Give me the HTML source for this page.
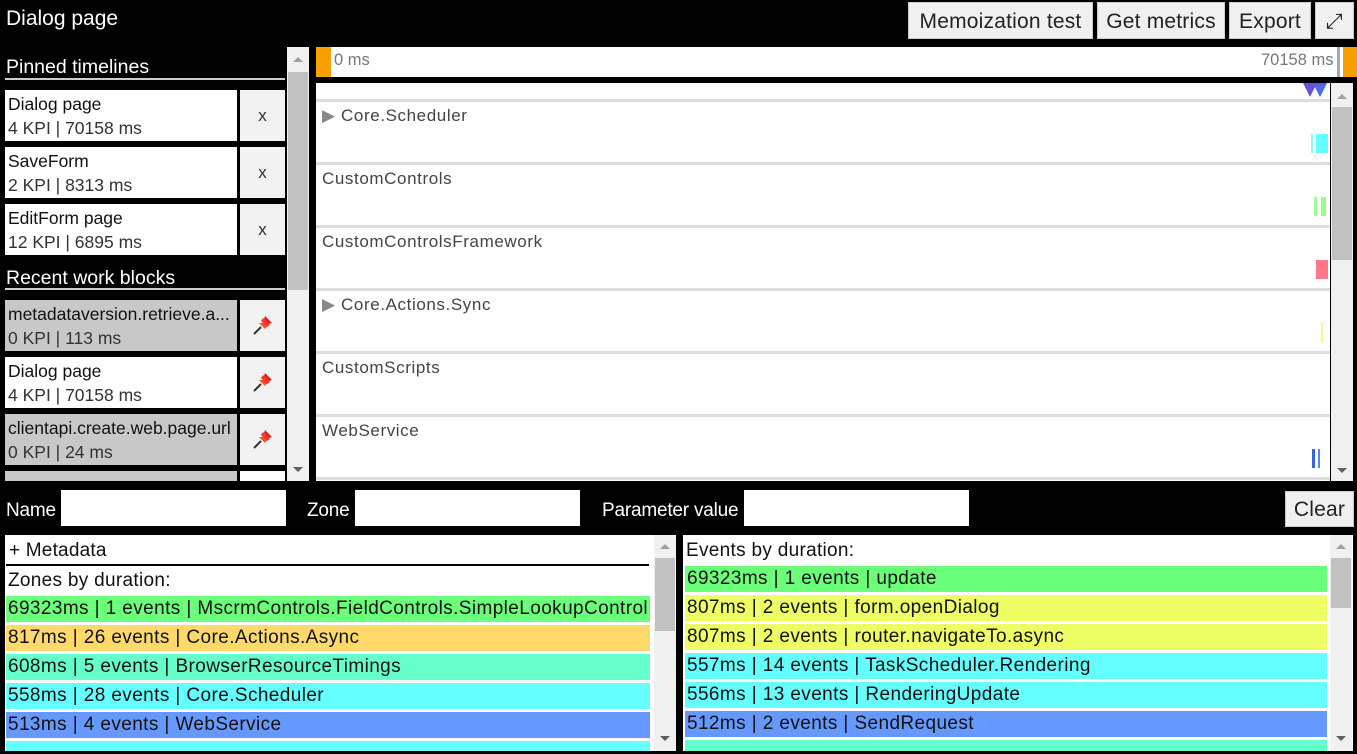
<!DOCTYPE html>
<html><head><meta charset="utf-8"><style>
*{box-sizing:border-box;margin:0;padding:0}
body{width:1357px;height:754px;background:#000;position:relative;overflow:hidden;font-family:"Liberation Sans",sans-serif;}
.a{position:absolute;white-space:nowrap}
.w{color:#fff}
.btn{position:absolute;background:#f0f0f0;border:1px solid #ccc;color:#222;font-size:21px;text-align:center;line-height:37px;letter-spacing:0.2px}
.card{position:absolute;left:5px;width:232px;height:51px;background:#fff;padding:2px 0 0 3px;font-size:17.5px;line-height:24px;color:#111;overflow:hidden}
.card.g{background:#c8c8c8}
.card b{font-weight:normal;display:block}
.card span{color:#333}
.x{position:absolute;left:240px;width:45px;height:51px;background:#f2f2f2;text-align:center;line-height:51px;font-size:17px;color:#333}
.x svg{margin-top:14px}
.sb{position:absolute;background:#f0f0f0}
.th{position:absolute;background:#c1c1c1}
.up,.dn{position:absolute;width:0;height:0;border-left:5px solid transparent;border-right:5px solid transparent}
.up{border-bottom:5px solid #a0a0a0}.dn{border-top:5px solid #606060}
.row{position:absolute;left:316px;width:1014px;color:#444;font-size:17px;padding-left:6px;letter-spacing:0.6px}
.ln{position:absolute;left:316px;width:1014px;height:3px;background:#ddd}
.lst{position:absolute;height:26px;font-size:19px;line-height:26px;padding-left:2px;color:#111;letter-spacing:0.4px;overflow:hidden}
.inp{position:absolute;background:#fff;height:36px;top:490px;width:225px}
.lbl{position:absolute;color:#fff;font-size:19px;top:500px;letter-spacing:-0.2px}
</style></head><body>
<div class="a w" style="left:6px;top:7px;font-size:21px">Dialog page</div>
<div class="btn" style="left:908px;top:2px;width:185px;height:37px">Memoization test</div>
<div class="btn" style="left:1097px;top:2px;width:128px;height:37px">Get metrics</div>
<div class="btn" style="left:1229px;top:2px;width:82px;height:37px">Export</div>
<div class="btn" style="left:1315px;top:2px;width:39px;height:37px">⤢</div>

<div class="a w" style="left:6px;top:56px;font-size:19.5px">Pinned timelines</div>
<div class="a" style="left:5px;top:78px;width:280px;height:2px;background:#ccc"></div>
<div class="card" style="top:90px"><b>Dialog page</b><span>4 KPI | 70158 ms</span></div><div class="x" style="top:90px">x</div>
<div class="card" style="top:147px"><b>SaveForm</b><span>2 KPI | 8313 ms</span></div><div class="x" style="top:147px">x</div>
<div class="card" style="top:204px"><b>EditForm page</b><span>12 KPI | 6895 ms</span></div><div class="x" style="top:204px">x</div>
<div class="a w" style="left:6px;top:267px;font-size:19.5px">Recent work blocks</div>
<div class="a" style="left:5px;top:288px;width:280px;height:2px;background:#ccc"></div>
<div class="card g" style="top:300px"><b>metadataversion.retrieve.a...</b><span>0 KPI | 113 ms</span></div>
<div class="card" style="top:357px"><b>Dialog page</b><span>4 KPI | 70158 ms</span></div>
<div class="card g" style="top:414px"><b>clientapi.create.web.page.url</b><span>0 KPI | 24 ms</span></div>
<div class="x" style="top:300px"><svg width="22" height="22" viewBox="0 0 22 22"><path d="M2 20 L9 13" stroke="#333" stroke-width="2"/><path d="M7 9 L13 15 L15 12 L12 9Z" fill="#e52"/><path d="M11 4 L18 11 L15 13 L9 7Z" fill="#f33"/><path d="M13 2 L20 9 L17 10 L12 5Z" fill="#d21"/></svg></div>
<div class="x" style="top:357px"><svg width="22" height="22" viewBox="0 0 22 22"><path d="M2 20 L9 13" stroke="#333" stroke-width="2"/><path d="M7 9 L13 15 L15 12 L12 9Z" fill="#e52"/><path d="M11 4 L18 11 L15 13 L9 7Z" fill="#f33"/><path d="M13 2 L20 9 L17 10 L12 5Z" fill="#d21"/></svg></div>
<div class="x" style="top:414px"><svg width="22" height="22" viewBox="0 0 22 22"><path d="M2 20 L9 13" stroke="#333" stroke-width="2"/><path d="M7 9 L13 15 L15 12 L12 9Z" fill="#e52"/><path d="M11 4 L18 11 L15 13 L9 7Z" fill="#f33"/><path d="M13 2 L20 9 L17 10 L12 5Z" fill="#d21"/></svg></div>
<div class="card g" style="top:471px;height:10px"></div><div class="x" style="top:471px;height:10px;background:#fff"></div>
<div class="sb" style="left:287px;top:47px;width:22px;height:434px"></div>
<div class="th" style="left:288px;top:72px;width:20px;height:218px"></div>
<div class="up" style="left:293px;top:57px"></div><div class="dn" style="left:293px;top:467px"></div>

<div class="a" style="left:316px;top:47px;width:1041px;height:30px;background:#fff"></div>
<div class="a" style="left:316px;top:47px;width:15px;height:30px;background:#f7a000"></div>
<div class="a" style="left:1343px;top:47px;width:14px;height:30px;background:#f7a000"></div>
<div class="a" style="left:1337px;top:47px;width:3px;height:30px;background:#9ab"></div>
<div class="a" style="left:334px;top:51px;font-size:16.5px;color:#777">0 ms</div>
<div class="a" style="left:1261px;top:51px;font-size:16.5px;color:#777">70158 ms</div>

<div class="a" style="left:316px;top:83px;width:1014px;height:398px;background:#fff"></div>
<svg class="a" style="left:1302px;top:83px" width="26" height="16"><path d="M1 0 L8 14 L13 4 L18 14 L25 0Z" fill="#6a4fd8"/><path d="M13 4 L18 14 L25 0 Z" fill="#4a6ef0"/></svg>
<div class="ln" style="top:99px"></div>
<div class="row" style="top:106px"><span style="color:#888">▶</span> Core.Scheduler</div>
<div class="ln" style="top:162px"></div>
<div class="row" style="top:169px">CustomControls</div>
<div class="ln" style="top:225px"></div>
<div class="row" style="top:232px">CustomControlsFramework</div>
<div class="ln" style="top:288px"></div>
<div class="row" style="top:295px"><span style="color:#888">▶</span> Core.Actions.Sync</div>
<div class="ln" style="top:351px"></div>
<div class="row" style="top:358px">CustomScripts</div>
<div class="ln" style="top:414px"></div>
<div class="row" style="top:421px">WebService</div>
<div class="ln" style="top:477px"></div>
<div class="a" style="left:1311px;top:134px;width:2px;height:19px;background:#8ff"></div>
<div class="a" style="left:1316px;top:134px;width:12px;height:19px;background:#6ff"></div>
<div class="a" style="left:1314px;top:197px;width:3px;height:19px;background:#9f9"></div>
<div class="a" style="left:1321px;top:197px;width:5px;height:19px;background:#9f8"></div>
<div class="a" style="left:1316px;top:260px;width:12px;height:19px;background:#f78"></div>
<div class="a" style="left:1321px;top:323px;width:2px;height:19px;background:#ef8"></div>
<div class="a" style="left:1312px;top:449px;width:3px;height:19px;background:#36d"></div>
<div class="a" style="left:1318px;top:449px;width:2px;height:19px;background:#58e"></div>
<div class="sb" style="left:1331px;top:83px;width:22px;height:398px"></div>
<div class="th" style="left:1332px;top:107px;width:20px;height:153px"></div>
<div class="up" style="left:1337px;top:94px"></div><div class="dn" style="left:1337px;top:468px"></div>

<div class="lbl" style="left:6px">Name</div><div class="inp" style="left:61px"></div>
<div class="lbl" style="left:307px">Zone</div><div class="inp" style="left:355px"></div>
<div class="lbl" style="left:602px">Parameter value</div><div class="inp" style="left:744px"></div>
<div class="btn" style="left:1285px;top:491px;width:69px;height:36px;line-height:35px">Clear</div>

<div class="a" style="left:5px;top:535px;width:671px;height:216px;background:#fff"></div>
<div class="a" style="left:9px;top:540px;font-size:19px;color:#111;letter-spacing:0.2px">+ Metadata</div>
<div class="a" style="left:6px;top:564px;width:643px;height:2px;background:#000"></div>
<div class="a" style="left:8px;top:570px;font-size:19px;color:#111;letter-spacing:0.3px">Zones by duration:</div>
<div class="lst" style="left:6px;width:644px;top:596px;background:#6bff7a">69323ms | 1 events | MscrmControls.FieldControls.SimpleLookupControl</div>
<div class="lst" style="left:6px;width:644px;top:625px;background:#ffd96a">817ms | 26 events | Core.Actions.Async</div>
<div class="lst" style="left:6px;width:644px;top:654px;background:#66ffcc">608ms | 5 events | BrowserResourceTimings</div>
<div class="lst" style="left:6px;width:644px;top:683px;background:#66ffff">558ms | 28 events | Core.Scheduler</div>
<div class="lst" style="left:6px;width:644px;top:712px;background:#6699ff">513ms | 4 events | WebService</div>
<div class="lst" style="left:6px;width:644px;top:741px;height:10px;background:#66ffff"></div>
<div class="sb" style="left:654px;top:535px;width:22px;height:216px"></div>
<div class="th" style="left:655px;top:558px;width:20px;height:73px"></div>
<div class="up" style="left:660px;top:544px"></div><div class="dn" style="left:660px;top:736px"></div>

<div class="a" style="left:683px;top:535px;width:670px;height:216px;background:#fff"></div>
<div class="a" style="left:686px;top:540px;font-size:19px;color:#111;letter-spacing:0.3px">Events by duration:</div>
<div class="lst" style="left:685px;width:642px;top:566px;background:#6bff7a">69323ms | 1 events | update</div>
<div class="lst" style="left:685px;width:642px;top:595px;background:#eeff66">807ms | 2 events | form.openDialog</div>
<div class="lst" style="left:685px;width:642px;top:624px;background:#eeff66">807ms | 2 events | router.navigateTo.async</div>
<div class="lst" style="left:685px;width:642px;top:653px;background:#66ffff">557ms | 14 events | TaskScheduler.Rendering</div>
<div class="lst" style="left:685px;width:642px;top:682px;background:#66ffff">556ms | 13 events | RenderingUpdate</div>
<div class="lst" style="left:685px;width:642px;top:711px;background:#6699ff">512ms | 2 events | SendRequest</div>
<div class="lst" style="left:685px;width:642px;top:740px;height:11px;background:#66ffcc"></div>
<div class="sb" style="left:1330px;top:535px;width:22px;height:216px"></div>
<div class="th" style="left:1331px;top:558px;width:20px;height:50px"></div>
<div class="up" style="left:1336px;top:544px"></div><div class="dn" style="left:1336px;top:736px"></div>
</body></html>
